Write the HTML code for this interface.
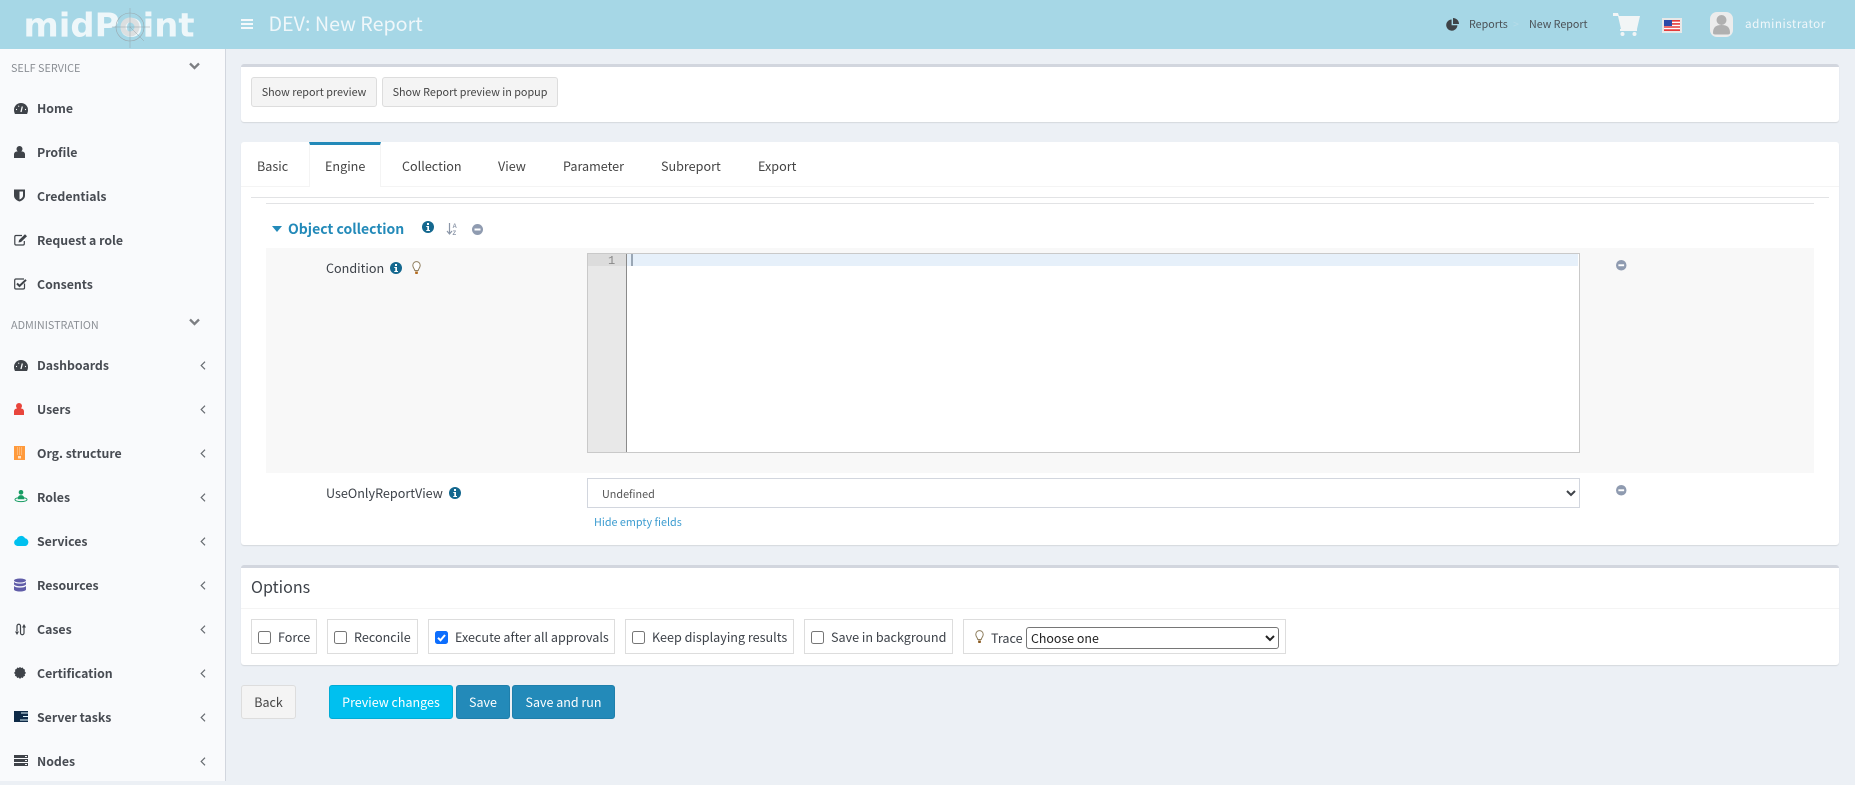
<!DOCTYPE html>
<html><head><meta charset="utf-8"><title>New Report</title>
<style>
*{box-sizing:border-box}
html,body{margin:0;padding:0;width:1855px;height:785px;overflow:hidden;background:#ecf0f5}
body{position:relative;font-family:"Noto Sans CJK SC","Noto Sans CJK JP","Liberation Sans",sans-serif;font-size:12.6px;color:#3d4249}
.a{position:absolute}
.t{position:absolute;white-space:nowrap;line-height:20px;height:20px}
.m{font-weight:700;font-size:12.3px;left:37px;color:#474b52}
.s{font-size:10.8px;left:11px;color:#8b8f95}
.box{position:absolute;background:#fff;border-radius:3px;box-shadow:0 1px 1px rgba(0,0,0,.1)}
.btn{position:absolute;border-radius:3px;text-align:center;font-size:10.8px;line-height:28px;height:30px;background:#f4f4f4;border:1px solid #ddd;color:#444;white-space:nowrap}
.b2{height:34px;line-height:32px;font-size:12.5px;color:#fff;border:1px solid #1f7fab;background:#238ab9}
.cb{position:absolute;top:619px;height:35px;border:1px solid #ddd;background:#fff}
.ck{position:absolute;top:631px;width:13px;height:13px;border:1px solid #767676;border-radius:2.5px;background:#fff}
svg{position:absolute;overflow:visible}
.tab{font-size:12.6px;color:#444;top:156px}
</style></head><body>

<!-- header -->
<div class="a" style="left:0;top:0;width:1855px;height:49px;background:#a6d7e6"></div>
<svg style="left:20px;top:5px" width="180" height="44" viewBox="0 0 180 44">
<text x="3.500" y="31.600" font-family="'DejaVu Sans','Liberation Sans',sans-serif" font-weight="700" font-size="33" textLength="171" lengthAdjust="spacingAndGlyphs" fill="#eef7fa">midPoint</text>
<circle cx="110" cy="22" r="14" fill="none" stroke="#9aa7ad" stroke-width=".6"/>
<circle cx="110" cy="22" r="7" fill="none" stroke="#dcdfe0" stroke-width="5"/>
<path d="M110 3V43M92 22H130M110 22L124 36" stroke="#93a3aa" stroke-width=".5" fill="none"/>
</svg>
<svg style="left:241px;top:19px" width="12" height="10"><path d="M0 0h12v2H0zM0 4h12v2H0zM0 8h12v2H0z" fill="#f5f9fb"/></svg>
<div class="t" style="left:268.500px;top:13px;font-size:19.700px;color:#eff7fa">DEV: New Report</div>

<svg style="left:1446px;top:18px" width="13" height="13" viewBox="0 0 13 13"><path d="M5.600 1.500A5.600 5.600 0 1 0 11.400 7.300H5.600z" fill="#3f4347"/><path d="M7 0a6 6 0 0 1 6 6H7z" fill="#3f4347"/></svg>
<div class="t" style="left:1469px;top:15px;font-size:10.700px;color:#4a5055">Reports</div>
<div class="t" style="left:1513px;top:15px;font-size:10.700px;color:#b7dce8">&gt;</div>
<div class="t" style="left:1529px;top:15px;font-size:10.700px;color:#4a5055">New Report</div>
<svg style="left:1613px;top:13px" width="27" height="23" viewBox="0 0 27 23"><path d="M0 0h5l1 3h21l-3 13H8L5 3H0z" fill="#f2f5f6"/><rect x="7" y="16" width="17" height="2" fill="#f2f5f6"/><circle cx="9.500" cy="21" r="2" fill="#f2f5f6"/><circle cx="21.500" cy="21" r="2" fill="#f2f5f6"/></svg>
<div class="a" style="left:1662px;top:18px;width:20px;height:15px;background:#e8e8e8"></div>
<svg style="left:1664px;top:20px" width="16" height="11" viewBox="0 0 16 11"><rect width="16" height="11" fill="#fff"/><path d="M0 0h16v1.600H0zM0 3.100h16v1.600H0zM0 6.200h16v1.600H0zM0 9.300h16V11H0z" fill="#e53b3b"/><rect width="8" height="6" fill="#2c4aa8"/></svg>
<div class="a" style="left:1710px;top:12px;width:23px;height:25px;background:#ececec;border-radius:7px"></div>
<svg style="left:1712px;top:14px" width="19" height="21" viewBox="0 0 19 21"><circle cx="9.500" cy="6" r="5" fill="#b0b0b0"/><path d="M1 19c0-6 3-8 8.500-8s8.500 2 8.500 8c0 1-1 1.500-2 1.500H3C2 20.500 1 20 1 19z" fill="#b0b0b0"/></svg>
<div class="t" style="left:1745px;top:14px;font-size:11.700px;color:#f0f7fa;letter-spacing:.5px">administrator</div>

<!-- sidebar -->
<div class="a" style="left:0;top:49px;width:226px;height:732px;background:#f9fafc;border-right:1px solid #d2d6de"></div>
<div class="t s" style="top:58px">SELF SERVICE</div>
<div class="t s" style="top:315px">ADMINISTRATION</div>
<svg style="left:189px;top:62px" width="11" height="8" viewBox="0 0 11 8"><path d="M1 1.500l4.500 4.500L10 1.500" fill="none" stroke="#7d7f83" stroke-width="2.300"/></svg>
<svg style="left:189px;top:318px" width="11" height="8" viewBox="0 0 11 8"><path d="M1 1.500l4.500 4.500L10 1.500" fill="none" stroke="#7d7f83" stroke-width="2.300"/></svg>

<div class="t m" style="top:98px">Home</div>
<div class="t m" style="top:142px">Profile</div>
<div class="t m" style="top:186px">Credentials</div>
<div class="t m" style="top:230px">Request a role</div>
<div class="t m" style="top:274px">Consents</div>
<div class="t m" style="top:355px">Dashboards</div>
<div class="t m" style="top:399px">Users</div>
<div class="t m" style="top:443px">Org. structure</div>
<div class="t m" style="top:487px">Roles</div>
<div class="t m" style="top:531px">Services</div>
<div class="t m" style="top:575px">Resources</div>
<div class="t m" style="top:619px">Cases</div>
<div class="t m" style="top:663px">Certification</div>
<div class="t m" style="top:707px">Server tasks</div>
<div class="t m" style="top:751px">Nodes</div>

<!-- sidebar icons -->
<svg style="left:14px;top:103px" width="14" height="11" viewBox="0 0 14 11"><path d="M7 0a7 7 0 0 1 7 7c0 1.500-.4 2.800-1 4H1C.4 9.800 0 8.500 0 7a7 7 0 0 1 7-7z" fill="#3f4349"/><path d="M7 9L8.300 3.500" stroke="#f9fafc" stroke-width="1.300"/><path d="M2.500 6.500h.01M4.700 3.200h.01M11.500 6.500h.01" stroke="#f9fafc" stroke-width="1.200" stroke-linecap="round"/></svg>
<svg style="left:14px;top:146px" width="11" height="12" viewBox="0 0 11 12"><circle cx="5.500" cy="3" r="3" fill="#3f4349"/><path d="M0 12V8.500C0 6.500 1.500 5.500 3 5.500h5c1.500 0 3 1 3 3V12z" fill="#3f4349"/></svg>
<svg style="left:14px;top:189px" width="11" height="13" viewBox="0 0 11 12"><path d="M0 0h11v6c0 3-2.500 5-5.500 6C2.500 11 0 9 0 6z" fill="#3f4349"/><path d="M5.500 2H9v4c0 2-1.700 3.200-3.500 4z" fill="#f9fafc"/></svg>
<svg style="left:14px;top:234px" width="14" height="12" viewBox="0 0 14 12"><path d="M8 1.500H2A1.300 1.300 0 0 0 .8 2.800v7A1.300 1.300 0 0 0 2 11h7a1.300 1.300 0 0 0 1.300-1.200V7" fill="none" stroke="#3f4349" stroke-width="1.200"/><path d="M4.500 8.500l.6-2.500L11 .3l2 2-5.900 5.700z" fill="#3f4349"/></svg>
<svg style="left:14px;top:278px" width="13" height="12" viewBox="0 0 13 12"><path d="M9.500 11H2A1.300 1.300 0 0 1 .7 9.800V2.300A1.300 1.300 0 0 1 2 1h8" fill="none" stroke="#3f4349" stroke-width="1.200"/><path d="M10.500 5.500v4.300a1.200 1.200 0 0 1-1 1.200" fill="none" stroke="#3f4349" stroke-width="1.200"/><path d="M3 5.500l2.500 2.500L12 1.800" fill="none" stroke="#3f4349" stroke-width="2"/></svg>
<svg style="left:14px;top:360px" width="14" height="11" viewBox="0 0 14 11"><path d="M7 0a7 7 0 0 1 7 7c0 1.500-.4 2.800-1 4H1C.4 9.800 0 8.500 0 7a7 7 0 0 1 7-7z" fill="#3f4349"/><path d="M7 9L8.300 3.500" stroke="#f9fafc" stroke-width="1.300"/><path d="M2.500 6.500h.01M4.700 3.200h.01M11.500 6.500h.01" stroke="#f9fafc" stroke-width="1.200" stroke-linecap="round"/></svg>
<svg style="left:14px;top:403px" width="10" height="12" viewBox="0 0 10 12"><circle cx="5" cy="3" r="3" fill="#e8453c"/><path d="M0 12V8.500C0 6.500 1.500 5.500 3 5.500h4c1.500 0 3 1 3 3V12z" fill="#e8453c"/></svg>
<svg style="left:14px;top:446px" width="11" height="14" viewBox="0 0 11 14"><rect width="11" height="14" fill="#ff9a3c"/><path d="M3 2h5M3 4h5M3 6h5M3 8h5" stroke="#ffd7ad" stroke-width="1" stroke-dasharray="1 1"/><rect x="4" y="10" width="3" height="2.500" fill="#ffe3c7"/></svg>
<svg style="left:14px;top:490px" width="14" height="13" viewBox="0 0 14 14"><circle cx="7" cy="2.500" r="2.500" fill="#179c63"/><path d="M3.500 10c0-3 1-4.500 3.500-4.500s3.500 1.500 3.500 4.500z" fill="#179c63"/><ellipse cx="7" cy="10.300" rx="6.500" ry="2.200" fill="none" stroke="#179c63" stroke-width="1"/></svg>
<svg style="left:14px;top:534px" width="15" height="13" viewBox="0 0 15 11"><path d="M3.500 11A3.500 3.500 0 0 1 2.800 4.100 4.500 4.500 0 0 1 11 3.200 4 4 0 0 1 11.500 11z" fill="#00c0ef"/></svg>
<svg style="left:14px;top:578px" width="12" height="14" viewBox="0 0 12 13"><ellipse cx="6" cy="2" rx="6" ry="2" fill="#605ca8"/><path d="M0 3.500c1 1.200 3 1.600 6 1.600s5-.4 6-1.600V6c-1 1.200-3 1.700-6 1.700S1 7.200 0 6zM0 7.500c1 1.200 3 1.600 6 1.600s5-.4 6-1.600V11c0 1-2.500 2-6 2s-6-1-6-2z" fill="#605ca8"/></svg>
<svg style="left:15px;top:623px" width="13" height="13" viewBox="0 0 13 13"><path d="M2 8V3a1.700 1.700 0 0 1 3.500 0v7a1.700 1.700 0 0 0 3.500 0V4" fill="none" stroke="#3f4349" stroke-width="1.200"/><path d="M0 8.500h4L2 12zM7 4.500h4L9 1z" fill="#3f4349"/></svg>
<svg style="left:14px;top:667px" width="12" height="12" viewBox="0 0 12 12"><path d="M6 0l1.300 1 1.500-.5.7 1.500 1.500.6-.3 1.600L12 6l-1.300 1.300.3 1.600-1.500.6-.7 1.500-1.500-.5L6 12l-1.300-1.500-1.500.5-.7-1.500L1 8.900l.3-1.600L0 6l1.300-1.800L1 2.600 2.500 2l.7-1.500 1.500.5z" fill="#3f4349"/></svg>
<svg style="left:14px;top:711px" width="14" height="11" viewBox="0 0 14 11"><rect width="14" height="11" fill="#0e2a47"/><path d="M7 2h7M9 5.500h5M6 9h8" stroke="#dff4fb" stroke-width="1"/></svg>
<svg style="left:14px;top:755px" width="14" height="11" viewBox="0 0 14 11"><path d="M0 0h14v3H0zM0 4h14v3H0zM0 8h14v3H0z" fill="#3f4349"/><path d="M11 1.500h2M11 5.500h2M11 9.500h2" stroke="#f9fafc" stroke-width="1"/></svg>
<svg style="left:200px;top:361px" width="6" height="9" viewBox="0 0 6 9"><path id="cv" d="M5 .7L1.200 4.500 5 8.300" fill="none" stroke="#666b70" stroke-width="1.200"/></svg>
<svg style="left:200px;top:405px" width="6" height="9"><use href="#cv"/></svg>
<svg style="left:200px;top:449px" width="6" height="9"><use href="#cv"/></svg>
<svg style="left:200px;top:493px" width="6" height="9"><use href="#cv"/></svg>
<svg style="left:200px;top:537px" width="6" height="9"><use href="#cv"/></svg>
<svg style="left:200px;top:581px" width="6" height="9"><use href="#cv"/></svg>
<svg style="left:200px;top:625px" width="6" height="9"><use href="#cv"/></svg>
<svg style="left:200px;top:669px" width="6" height="9"><use href="#cv"/></svg>
<svg style="left:200px;top:713px" width="6" height="9"><use href="#cv"/></svg>
<svg style="left:200px;top:757px" width="6" height="9"><use href="#cv"/></svg>

<!-- box 1 -->
<div class="box" style="left:241px;top:64px;width:1598px;height:58px;border-top:3px solid #d2d6de"></div>
<div class="btn" style="left:251px;top:77px;width:126px">Show report preview</div>
<div class="btn" style="left:382px;top:77px;width:176px">Show Report preview in popup</div>

<!-- tab box -->
<div class="box" style="left:241px;top:142px;width:1598px;height:403px"></div>
<div class="a" style="left:241px;top:186px;width:1598px;height:1px;background:#f4f4f4"></div>
<div class="a" style="left:309px;top:142px;width:72px;height:45px;background:#fff;border-top:3px solid #238ab9;border-left:1px solid #f4f4f4;border-right:1px solid #f4f4f4"></div>
<div class="t tab" style="left:257px">Basic</div>
<div class="t tab" style="left:325px">Engine</div>
<div class="t tab" style="left:402px">Collection</div>
<div class="t tab" style="left:498px">View</div>
<div class="t tab" style="left:563px">Parameter</div>
<div class="t tab" style="left:661px">Subreport</div>
<div class="t tab" style="left:758px">Export</div>
<div class="a" style="left:251px;top:197px;width:1578px;height:1px;background:#e2e3e5"></div>
<div class="a" style="left:266px;top:203px;width:1548px;height:1px;background:#e2e3e5"></div>

<svg style="left:272px;top:226px" width="10" height="6"><path d="M0 0h10L5 6z" fill="#238ab9"/></svg>
<div class="t" style="left:288px;top:219px;font-size:14px;font-weight:700;color:#238ab9">Object collection</div>
<svg style="left:422px;top:221px" width="12" height="12" viewBox="0 0 12 12"><circle cx="6" cy="6" r="6" fill="#14688f"/><path d="M5 2h2v2H5zM4.300 5H7v4h1v1H4.300V9h1V6h-1z" fill="#fff"/></svg>
<svg style="left:447px;top:223px" width="11" height="13" viewBox="0 0 11 13"><path d="M2.500 0v10M0 8l2.500 3L5 8" fill="none" stroke="#8b96a8" stroke-width="1.200"/><text x="5.500" y="5" font-size="6" font-weight="700" font-family="'Liberation Sans',sans-serif" fill="#8b96a8">A</text><text x="5.500" y="12" font-size="6" font-weight="700" font-family="'Liberation Sans',sans-serif" fill="#8b96a8">Z</text></svg>
<svg style="left:472px;top:224px" width="11" height="11" viewBox="0 0 11 11"><circle cx="5.500" cy="5.500" r="5.500" fill="#8f9bb0"/><rect x="2.500" y="4.500" width="6" height="2" fill="#fff"/></svg>

<!-- condition row -->
<div class="a" style="left:266px;top:248px;width:1548px;height:225px;background:#f8f8f8"></div>
<div class="t" style="left:326px;top:258px">Condition</div>
<svg style="left:390px;top:262px" width="12" height="12" viewBox="0 0 12 12"><circle cx="6" cy="6" r="6" fill="#14688f"/><path d="M5 2h2v2H5zM4.300 5H7v4h1v1H4.300V9h1V6h-1z" fill="#fff"/></svg>
<svg style="left:412px;top:261px" width="9" height="14" viewBox="0 0 9 14"><path d="M2.800 9.500C2.500 7.500.8 6.800.8 4.300a3.700 3.700 0 0 1 7.400 0c0 2.500-1.700 3.200-2 5.200z" fill="#fff" stroke="#8f7f5f" stroke-width="1"/><path d="M3 10.500h3l-.3 2.500H3.300z" fill="#b36b1e"/></svg>
<div class="a" style="left:587px;top:253px;width:993px;height:200px;background:#fff;border:1.500px solid #c9c9c9"></div>
<div class="a" style="left:588px;top:254px;width:39px;height:198px;background:#e8e8e8;border-right:1px solid #8a8a8a"></div>
<div class="a" style="left:588px;top:254px;width:38px;height:12px;background:#dcdcdc"></div>
<div class="a" style="left:627px;top:254px;width:951px;height:12px;background:#e6f0fa"></div>
<div class="a" style="left:631px;top:254px;width:2px;height:12px;background:#9aa7b5"></div>
<div class="t" style="left:608px;top:251px;font-size:12px;color:#888;font-family:'Liberation Mono',monospace">1</div>
<svg style="left:1616px;top:260px" width="10.500" height="10.500" viewBox="0 0 11 11"><circle cx="5.500" cy="5.500" r="5.500" fill="#8f9bb0"/><rect x="2.500" y="4.500" width="6" height="2" fill="#fff"/></svg>

<!-- useOnly row -->
<div class="t" style="left:326px;top:483px">UseOnlyReportView</div>
<svg style="left:449px;top:487px" width="12" height="12" viewBox="0 0 12 12"><circle cx="6" cy="6" r="6" fill="#14688f"/><path d="M5 2h2v2H5zM4.300 5H7v4h1v1H4.300V9h1V6h-1z" fill="#fff"/></svg>
<div class="a" style="left:587px;top:478px;width:993px;height:30px;background:#fff;border:1px solid #d2d6de"></div>
<div class="t" style="left:602px;top:484px;font-size:10.800px;color:#555">Undefined</div>
<svg style="left:1566px;top:490px" width="10" height="7" viewBox="0 0 10 7"><path d="M1 1l4 4 4-4" fill="none" stroke="#3f4349" stroke-width="2"/></svg>
<svg style="left:1616px;top:485px" width="10.500" height="10.500" viewBox="0 0 11 11"><circle cx="5.500" cy="5.500" r="5.500" fill="#8f9bb0"/><rect x="2.500" y="4.500" width="6" height="2" fill="#fff"/></svg>
<div class="t" style="left:594px;top:512px;font-size:10.800px;color:#3c9cd0">Hide empty fields</div>

<!-- options -->
<div class="box" style="left:241px;top:565px;width:1598px;height:100px;border-top:3px solid #d2d6de"></div>
<div class="t" style="left:251px;top:576px;font-size:16.100px">Options</div>
<div class="a" style="left:241px;top:608px;width:1598px;height:1px;background:#f4f4f4"></div>
<div class="cb" style="left:251px;width:66px"></div>
<div class="cb" style="left:327px;width:91px"></div>
<div class="cb" style="left:428px;width:187px"></div>
<div class="cb" style="left:625px;width:169px"></div>
<div class="cb" style="left:804px;width:149px"></div>
<div class="cb" style="left:963px;width:323px"></div>
<div class="ck" style="left:258px"></div>
<div class="t" style="left:278px;top:627px">Force</div>
<div class="ck" style="left:334px"></div>
<div class="t" style="left:354px;top:627px">Reconcile</div>
<div class="ck" style="left:435px;background:#0d6efd;border-color:#0d6efd"></div>
<svg style="left:435px;top:631px" width="13" height="13" viewBox="0 0 13 13"><path d="M3 6.800l2.500 2.500L10 4" fill="none" stroke="#fff" stroke-width="2"/></svg>
<div class="t" style="left:455px;top:627px">Execute after all approvals</div>
<div class="ck" style="left:632px"></div>
<div class="t" style="left:652px;top:627px">Keep displaying results</div>
<div class="ck" style="left:811px"></div>
<div class="t" style="left:831px;top:627px">Save in background</div>
<svg style="left:975px;top:630px" width="9" height="14" viewBox="0 0 9 14"><path d="M2.800 9.500C2.500 7.500.8 6.800.8 4.300a3.700 3.700 0 0 1 7.400 0c0 2.500-1.700 3.200-2 5.200z" fill="#fff" stroke="#8f7f5f" stroke-width="1"/><path d="M3 10.500h3l-.3 2.500H3.300z" fill="#8a5a20"/></svg>
<div class="t" style="left:991px;top:628px">Trace</div>
<div class="a" style="left:1026px;top:627px;width:253px;height:22px;background:#fff;border:1px solid #767676;border-radius:3px"></div>
<div class="t" style="left:1031px;top:628px;color:#222;font-size:12.400px">Choose one</div>
<svg style="left:1265px;top:635px" width="10" height="7" viewBox="0 0 10 7"><path d="M1 1l4 4 4-4" fill="none" stroke="#222" stroke-width="2"/></svg>

<!-- bottom buttons -->
<div class="btn b2" style="left:241px;top:685px;width:55px;background:#f4f4f4;border-color:#ddd;color:#444">Back</div>
<div class="btn b2" style="left:329px;top:685px;width:124px;background:#00c0ef;border-color:#00acd6">Preview changes</div>
<div class="btn b2" style="left:456px;top:685px;width:54px">Save</div>
<div class="btn b2" style="left:512px;top:685px;width:103px">Save and run</div>
</body></html>
